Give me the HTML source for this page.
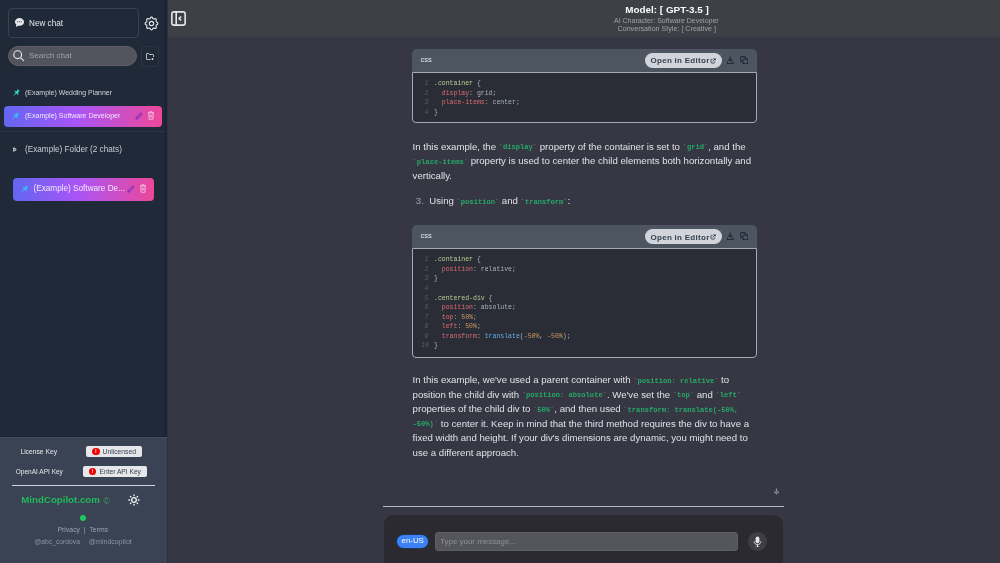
<!DOCTYPE html>
<html><head><meta charset="utf-8">
<style>
*{box-sizing:border-box;margin:0;padding:0}
html,body{width:1000px;height:563px;overflow:hidden}
body{position:relative;background:#373744;font-family:"Liberation Sans",sans-serif;color:#e5e7eb}
.a{position:absolute}
.nw{white-space:nowrap}
#sb{left:0;top:0;width:167px;height:563px;background:#202938}
#sbedge{left:163.5px;top:0;width:3.5px;height:437px;background:#1e2433}
#hdr{left:168px;top:0;width:832px;height:38.5px;background:linear-gradient(180deg,#3f4046 0,#3f4046 33px,#3d3e48 36.5px,#363640 38.5px)}
.mono{font-family:"Liberation Mono",monospace}
.grad{background:linear-gradient(90deg,#6366f1,#a855f7 45%,#ec4899)}
.cb{left:412px;width:345px;border-radius:5px;background:#4d5561}
.cbh{height:23px;position:relative}
.cbc{position:absolute;left:0;right:0;background:#2a2d35;border:1px solid #a3a8b3;border-radius:0 0 4px 4px}
.cl{position:absolute;font-family:"Liberation Mono",monospace;font-size:6.5px;white-space:pre;color:#abb2bf;line-height:9.53px}
.ln{color:#565d6b;font-style:italic;display:inline-block;width:7.3px;text-align:right;margin-right:5.7px}
.s{color:#b9cf98}.p{color:#e06c75}.n{color:#d19a66}.f{color:#61afef}
.pill{position:absolute;background:#d1d5db;color:#374151;border-radius:8px;font-weight:bold}
.txt{font-size:9.65px;line-height:14.6px;color:#dfe1e6;white-space:nowrap}
.ic{font-family:"Liberation Mono",monospace;font-weight:bold;color:#25a968;font-size:7.1px;line-height:0;position:relative;top:-0.4px}
.bt{color:#6b7280}
</style></head><body><div id="root" style="position:absolute;left:0;top:0;width:1000px;height:563px;will-change:transform">
<!-- sidebar -->
<div class="a" id="sb"></div>
<div class="a" id="sbedge"></div>
<div class="a" style="left:8px;top:8px;width:131px;height:30px;border:1px solid #394252;border-radius:4px"></div>
<svg class="a" style="left:14px;top:17px" width="11" height="11" viewBox="0 0 24 24"><path d="M12 2C6.5 2 2 5.8 2 10.5c0 2.4 1.2 4.6 3.1 6.1L4 22l5.3-3c.9.2 1.8.3 2.7.3 5.5 0 10-3.8 10-8.5S17.5 2 12 2z" fill="#e5e7eb"/><circle cx="8" cy="10.5" r="1.2" fill="#202938"/><circle cx="12" cy="10.5" r="1.2" fill="#202938"/><circle cx="16" cy="10.5" r="1.2" fill="#202938"/></svg>
<div class="a nw" style="left:29px;top:18px;font-size:8.16px;line-height:12px;color:#e5e7eb">New chat</div>
<svg class="a" style="left:143.3px;top:15px" width="17" height="17" viewBox="0 0 24 24" fill="none" stroke="#e5e7eb" stroke-width="1.6"><path d="M10.325 4.317c.426-1.756 2.924-1.756 3.35 0a1.724 1.724 0 0 0 2.573 1.066c1.543-.94 3.31.826 2.37 2.37a1.724 1.724 0 0 0 1.065 2.572c1.756.426 1.756 2.924 0 3.35a1.724 1.724 0 0 0-1.066 2.573c.94 1.543-.826 3.31-2.37 2.370a1.724 1.724 0 0 0-2.572 1.065c-.426 1.756-2.924 1.756-3.35 0a1.724 1.724 0 0 0-2.573-1.066c-1.543.94-3.31-.826-2.37-2.37a1.724 1.724 0 0 0-1.065-2.572c-1.756-.426-1.756-2.924 0-3.35a1.724 1.724 0 0 0 1.066-2.573c-.94-1.543.826-3.31 2.37-2.37c1 .608 2.296.07 2.572-1.065z"/><circle cx="12" cy="12" r="3"/></svg>
<div class="a" style="left:8px;top:45.8px;width:129px;height:20px;border-radius:10px;background:#52535c;border:1px solid #5d5e68"></div>
<svg class="a" style="left:12px;top:48.6px" width="13" height="13" viewBox="0 0 24 24" fill="none" stroke="#e5e7eb" stroke-width="2.1"><circle cx="10.5" cy="10.5" r="7.2"/><path d="M15.8 15.8L21.6 21.6" stroke-linecap="round"/></svg>
<div class="a nw" style="left:29px;top:50px;font-size:8px;line-height:12px;color:#a1a1aa">Search chat</div>
<div class="a" style="left:140.5px;top:45.5px;width:18.5px;height:21px;border:1px solid #2b3443;border-radius:3px"></div>
<svg class="a" style="left:145.5px;top:52.5px" width="8" height="7.5" viewBox="0 0 16 15" fill="none" stroke="#e5e7eb" stroke-width="1.6"><path d="M9 13H2.2A1.2 1.2 0 0 1 1 11.8V2.2A1.2 1.2 0 0 1 2.2 1h3.3l1.6 2h6.7A1.2 1.2 0 0 1 15 4.2V8"/><path d="M13 10v4.5M10.8 12.2h4.4"/></svg>
<svg class="a" style="left:11.5px;top:88px" width="8.5" height="8.5" viewBox="0 0 24 24"><path d="M15 2l7 7-2 1-3 4 1 4-1.5 1.5-4-4L5 22l-1-1 6.5-7.5-4-4L8 8l4 1 4-3z" fill="#2dd4bf"/></svg>
<div class="a nw" style="left:25px;top:87px;font-size:6.97px;line-height:11px;color:#d1d5db">(Example) Wedding Planner</div>
<div class="a grad" style="left:4px;top:105.5px;width:158px;height:21.5px;border-radius:4px"></div>
<svg class="a" style="left:11px;top:111px" width="9" height="9" viewBox="0 0 24 24"><path d="M15 2l7 7-2 1-3 4 1 4-1.5 1.5-4-4L5 22l-1-1 6.5-7.5-4-4L8 8l4 1 4-3z" fill="#38bdf8"/></svg>
<div class="a nw" style="left:25px;top:109.6px;font-size:7px;line-height:11px;color:#f3e8ff">(Example) Software Developer</div>
<svg class="a" style="left:135px;top:112px" width="8" height="8" viewBox="0 0 24 24" fill="none" stroke="#5b21b6" stroke-width="2.6"><path d="M3 21l1-5L17 3l4 4L8 20z"/></svg>
<svg class="a" style="left:147px;top:111px" width="8" height="9" viewBox="0 0 20 24" fill="none" stroke="#fce7f3" stroke-width="1.8"><path d="M2 5h16M7 5V2h6v3M4 5l1 17h10l1-17"/><path d="M8 10v7M12 10v7"/></svg>
<div class="a" style="left:0;top:131px;width:165px;height:1px;background:#2b3443"></div>
<svg class="a" style="left:12.5px;top:147px" width="4" height="5" viewBox="0 0 8 10" fill="none" stroke="#e5e7eb" stroke-width="2"><path d="M1.5 1.5l5 3.5-5 3.5z"/></svg>
<div class="a nw" style="left:25px;top:144px;font-size:8.2px;line-height:12px;color:#c9cdd3">(Example) Folder (2 chats)</div>
<div class="a grad" style="left:12.7px;top:177.5px;width:141.5px;height:23px;border-radius:4px"></div>
<svg class="a" style="left:20px;top:184px" width="9" height="9" viewBox="0 0 24 24"><path d="M15 2l7 7-2 1-3 4 1 4-1.5 1.5-4-4L5 22l-1-1 6.5-7.5-4-4L8 8l4 1 4-3z" fill="#38bdf8"/></svg>
<div class="a nw" style="left:33.5px;top:183.2px;font-size:8.2px;line-height:12px;color:#f3e8ff">(Example) Software De...</div>
<svg class="a" style="left:127px;top:185px" width="8" height="8" viewBox="0 0 24 24" fill="none" stroke="#5b21b6" stroke-width="2.6"><path d="M3 21l1-5L17 3l4 4L8 20z"/></svg>
<svg class="a" style="left:139px;top:184px" width="8" height="9" viewBox="0 0 20 24" fill="none" stroke="#fce7f3" stroke-width="1.8"><path d="M2 5h16M7 5V2h6v3M4 5l1 17h10l1-17"/><path d="M8 10v7M12 10v7"/></svg>

<!-- bottom panel -->
<div class="a" style="left:0;top:436px;width:167px;height:1px;background:#1c2230"></div><div class="a" style="left:0;top:437px;width:167px;height:126px;background:#3a4353;border-top:1px solid #434c5d"></div><div class="a" style="left:167px;top:0;width:1px;height:563px;background:#2d313d"></div>
<div class="a nw" style="left:20.4px;top:446px;font-size:6.72px;line-height:11px;color:#e5e7eb">License Key</div>
<div class="a" style="left:86px;top:445.7px;width:56px;height:11.5px;border-radius:2px;background:#e5e7eb"></div>
<div class="a" style="left:92px;top:447.8px;width:7.5px;height:7.5px;border-radius:50%;background:#ef0000;color:#fff;font-size:5px;line-height:7.5px;text-align:center;font-weight:bold">!</div>
<div class="a nw" style="left:102.5px;top:446px;font-size:6.77px;line-height:11px;color:#374151">Unlicensed</div>
<div class="a nw" style="left:15.8px;top:465.5px;font-size:6.53px;line-height:11px;color:#e5e7eb">OpenAI API Key</div>
<div class="a" style="left:82.8px;top:465.5px;width:64px;height:11.5px;border-radius:2px;background:#e5e7eb"></div>
<div class="a" style="left:88.5px;top:467.5px;width:7.5px;height:7.5px;border-radius:50%;background:#ef0000;color:#fff;font-size:5px;line-height:7.5px;text-align:center;font-weight:bold">!</div>
<div class="a nw" style="left:99.5px;top:465.5px;font-size:6.67px;line-height:11px;color:#374151">Enter API Key</div>
<div class="a" style="left:12px;top:484.5px;width:142.5px;height:1px;background:#d1d5db"></div>
<div class="a nw" style="left:21.3px;top:494px;font-size:9.7px;line-height:12px;font-weight:bold;color:#21bb5a">MindCopilot.com</div>
<div class="a nw" style="left:103.6px;top:495.3px;font-size:8.6px;line-height:12px;color:#4a9a6a">©</div>
<svg class="a" style="left:127.6px;top:494.3px" width="12" height="12" viewBox="0 0 24 24" fill="none" stroke="#f3f4f6" stroke-width="2.6" stroke-linecap="round"><circle cx="12" cy="12" r="4.6"/><path d="M12 1.8v1.6M12 20.6v1.6M1.8 12h1.6M20.6 12h1.6M4.8 4.8l1.1 1.1M18.1 18.1l1.1 1.1M4.8 19.2l1.1-1.1M18.1 5.9l1.1-1.1"/></svg>
<div class="a" style="left:80.3px;top:515.3px;width:6px;height:6px;border-radius:50%;background:#22c55e"></div>
<div class="a nw" style="left:57.5px;top:524px;font-size:6.86px;line-height:11px;color:#9ca3af">Privacy &nbsp;| &nbsp;Terms</div>
<div class="a nw" style="left:34.5px;top:536.2px;font-size:6.75px;line-height:11px;color:#8b93a0">@abc_cordova</div><div class="a nw" style="left:88.8px;top:536.9px;font-size:7.08px;line-height:11px;color:#8b93a0">@mindcopilot</div>

<!-- header -->
<div class="a" id="hdr"></div>
<svg class="a" style="left:171px;top:11px" width="15" height="15" viewBox="0 0 15 15" fill="none" stroke="#e5e7eb" stroke-width="1.6"><rect x="0.85" y="0.85" width="13.3" height="13.3" rx="2.2"/><path d="M5.2 1v13"/><path d="M10.1 5.5L8.2 7.5l1.9 2" stroke-width="1.7"/></svg>
<div class="a nw" style="left:625px;top:4px;width:84px;text-align:center;font-size:9.9px;line-height:12px;font-weight:bold;color:#f9fafb">Model: [ GPT-3.5 ]</div>
<div class="a nw" style="left:614px;top:16px;font-size:7px;line-height:9px;color:#a1a1aa">AI Character: Software Developer</div>
<div class="a nw" style="left:617.5px;top:24.5px;font-size:7.15px;line-height:9px;color:#a1a1aa">Conversation Style: [ Creative ]</div>

<!-- code block 1 -->
<div class="a cb" style="top:49px;height:74px">
  <div class="cbh">
    <div class="a nw" style="left:8.5px;top:5.5px;font-size:7.6px;line-height:9px;color:#e5e7eb">css</div>
    <div class="pill" style="left:233px;top:4px;width:77px;height:14.5px"></div>
    <div class="a nw" style="left:238.5px;top:7.3px;font-size:8px;letter-spacing:0.28px;line-height:9px;font-weight:bold;color:#374151">Open in Editor</div>
    <svg class="a" style="left:298px;top:9px" width="6" height="6" viewBox="0 0 12 12" fill="none" stroke="#374151" stroke-width="1.8"><path d="M5 2.5H3.5A1.5 1.5 0 0 0 2 4v4.5A1.5 1.5 0 0 0 3.5 10H8a1.5 1.5 0 0 0 1.5-1.5V7"/><path d="M7 1.5h3.5V5M10.5 1.5L5.5 6.5"/></svg>
    <svg class="a" style="left:315px;top:7px" width="6.5" height="8" viewBox="0 0 13 16" fill="none" stroke="#1f2937" stroke-width="2.2"><path d="M6.5 1v9M3 6.5l3.5 3.5L10 6.5"/><path d="M1 11v4h11v-4"/></svg>
    <svg class="a" style="left:327.5px;top:6.5px" width="8.5" height="8.5" viewBox="0 0 17 17" fill="none" stroke="#1f2937" stroke-width="2.2"><rect x="1.2" y="1.2" width="10" height="10" rx="2.5"/><rect x="5.8" y="5.8" width="10" height="10" rx="2.5" fill="#4b5563"/></svg>
  </div>
  <div class="cbc" style="top:23px;bottom:0"></div>
  <div class="cl" style="left:9px;top:30px"><span class="ln">1</span><span class="s">.container</span> {
<span class="ln">2</span>  <span class="p">display</span>: grid;
<span class="ln">3</span>  <span class="p">place-items</span>: center;
<span class="ln">4</span>}</div>
</div>

<!-- para 1 -->
<div class="a txt" style="left:412.6px;top:139.5px">In this example, the <span class="ic"><span class="bt">`</span>display<span class="bt">`</span></span> property of the container is set to <span class="ic"><span class="bt">`</span>grid<span class="bt">`</span></span>, and the<br><span class="ic"><span class="bt">`</span>place-items<span class="bt">`</span></span> property is used to center the child elements both horizontally and<br>vertically.</div>
<div class="a txt" style="left:415.8px;top:194px;color:#9ca3af">3.</div><div class="a txt" style="left:429.3px;top:194px">Using <span class="ic"><span class="bt">`</span>position<span class="bt">`</span></span> and <span class="ic"><span class="bt">`</span>transform<span class="bt">`</span></span>:</div>

<!-- code block 2 -->
<div class="a cb" style="top:225.4px;height:132.3px">
  <div class="cbh">
    <div class="a nw" style="left:8.5px;top:5.5px;font-size:7.6px;line-height:9px;color:#e5e7eb">css</div>
    <div class="pill" style="left:233px;top:4px;width:77px;height:14.5px"></div>
    <div class="a nw" style="left:238.5px;top:7.3px;font-size:8px;letter-spacing:0.28px;line-height:9px;font-weight:bold;color:#374151">Open in Editor</div>
    <svg class="a" style="left:298px;top:9px" width="6" height="6" viewBox="0 0 12 12" fill="none" stroke="#374151" stroke-width="1.8"><path d="M5 2.5H3.5A1.5 1.5 0 0 0 2 4v4.5A1.5 1.5 0 0 0 3.5 10H8a1.5 1.5 0 0 0 1.5-1.5V7"/><path d="M7 1.5h3.5V5M10.5 1.5L5.5 6.5"/></svg>
    <svg class="a" style="left:315px;top:7px" width="6.5" height="8" viewBox="0 0 13 16" fill="none" stroke="#1f2937" stroke-width="2.2"><path d="M6.5 1v9M3 6.5l3.5 3.5L10 6.5"/><path d="M1 11v4h11v-4"/></svg>
    <svg class="a" style="left:327.5px;top:6.5px" width="8.5" height="8.5" viewBox="0 0 17 17" fill="none" stroke="#1f2937" stroke-width="2.2"><rect x="1.2" y="1.2" width="10" height="10" rx="2.5"/><rect x="5.8" y="5.8" width="10" height="10" rx="2.5" fill="#4b5563"/></svg>
  </div>
  <div class="cbc" style="top:22.5px;bottom:0"></div>
  <div class="cl" style="left:9px;top:30px"><span class="ln">1</span><span class="s">.container</span> {
<span class="ln">2</span>  <span class="p">position</span>: relative;
<span class="ln">3</span>}
<span class="ln">4</span>
<span class="ln">5</span><span class="s">.centered-div</span> {
<span class="ln">6</span>  <span class="p">position</span>: absolute;
<span class="ln">7</span>  <span class="p">top</span>: <span class="n">50%</span>;
<span class="ln">8</span>  <span class="p">left</span>: <span class="n">50%</span>;
<span class="ln">9</span>  <span class="p">transform</span>: <span class="f">translate</span>(<span class="n">-50%</span>, <span class="n">-50%</span>);
<span class="ln">10</span>}</div>
</div>

<!-- para 2 -->
<div class="a txt" style="left:412.6px;top:373px">In this example, we've used a parent container with <span class="ic"><span class="bt">`</span>position: relative<span class="bt">`</span></span> to<br>position the child div with <span class="ic"><span class="bt">`</span>position: absolute<span class="bt">`</span></span>. We've set the <span class="ic"><span class="bt">`</span>top<span class="bt">`</span></span> and <span class="ic"><span class="bt">`</span>left<span class="bt">`</span></span><br>properties of the child div to <span class="ic"><span class="bt">`</span>50%<span class="bt">`</span></span>, and then used <span class="ic"><span class="bt">`</span>transform: translate(-50%,</span><br><span class="ic">-50%)<span class="bt">`</span></span> to center it. Keep in mind that the third method requires the div to have a<br>fixed width and height. If your div's dimensions are dynamic, you might need to<br>use a different approach.</div>

<!-- bottom input -->
<svg class="a" style="left:772.5px;top:488px" width="7" height="7" viewBox="0 0 14 14" fill="none" stroke="#8b8f9c" stroke-width="2.4"><path d="M7 1v7M2.5 7L7 11.5l4.5-4.5"/></svg>
<div class="a" style="left:383px;top:506px;width:401px;height:1.2px;background:#b8b9c2"></div>
<div class="a" style="left:384px;top:515px;width:399px;height:60px;border-radius:9px;background:#2a2a30"></div>
<div class="a" style="left:397px;top:534.5px;width:31px;height:13.3px;border-radius:7px;background:#3b82f6;box-shadow:0 0 0 0.6px #1d3f7a"></div>
<div class="a nw" style="left:401.5px;top:536.4px;font-size:7.9px;line-height:10px;color:#fff">en-US</div>
<div class="a" style="left:435px;top:531.7px;width:303px;height:19px;border-radius:3px;background:#55555c;border:1px solid #5e5e66"></div>
<div class="a nw" style="left:440.2px;top:537px;font-size:7.93px;line-height:10px;color:#8e9099">Type your message...</div>
<div class="a" style="left:748px;top:532px;width:18.7px;height:18.7px;border-radius:50%;background:#3e3e44"></div>
<svg class="a" style="left:753px;top:535.5px" width="9" height="11.5" viewBox="0 0 18 24"><rect x="5" y="1" width="8" height="14" rx="4" fill="#e5e7eb"/><path d="M2 11c0 4 3 7 7 7s7-3 7-7M9 18v5M5 23h8" fill="none" stroke="#e5e7eb" stroke-width="2"/></svg>
</div></body></html>
